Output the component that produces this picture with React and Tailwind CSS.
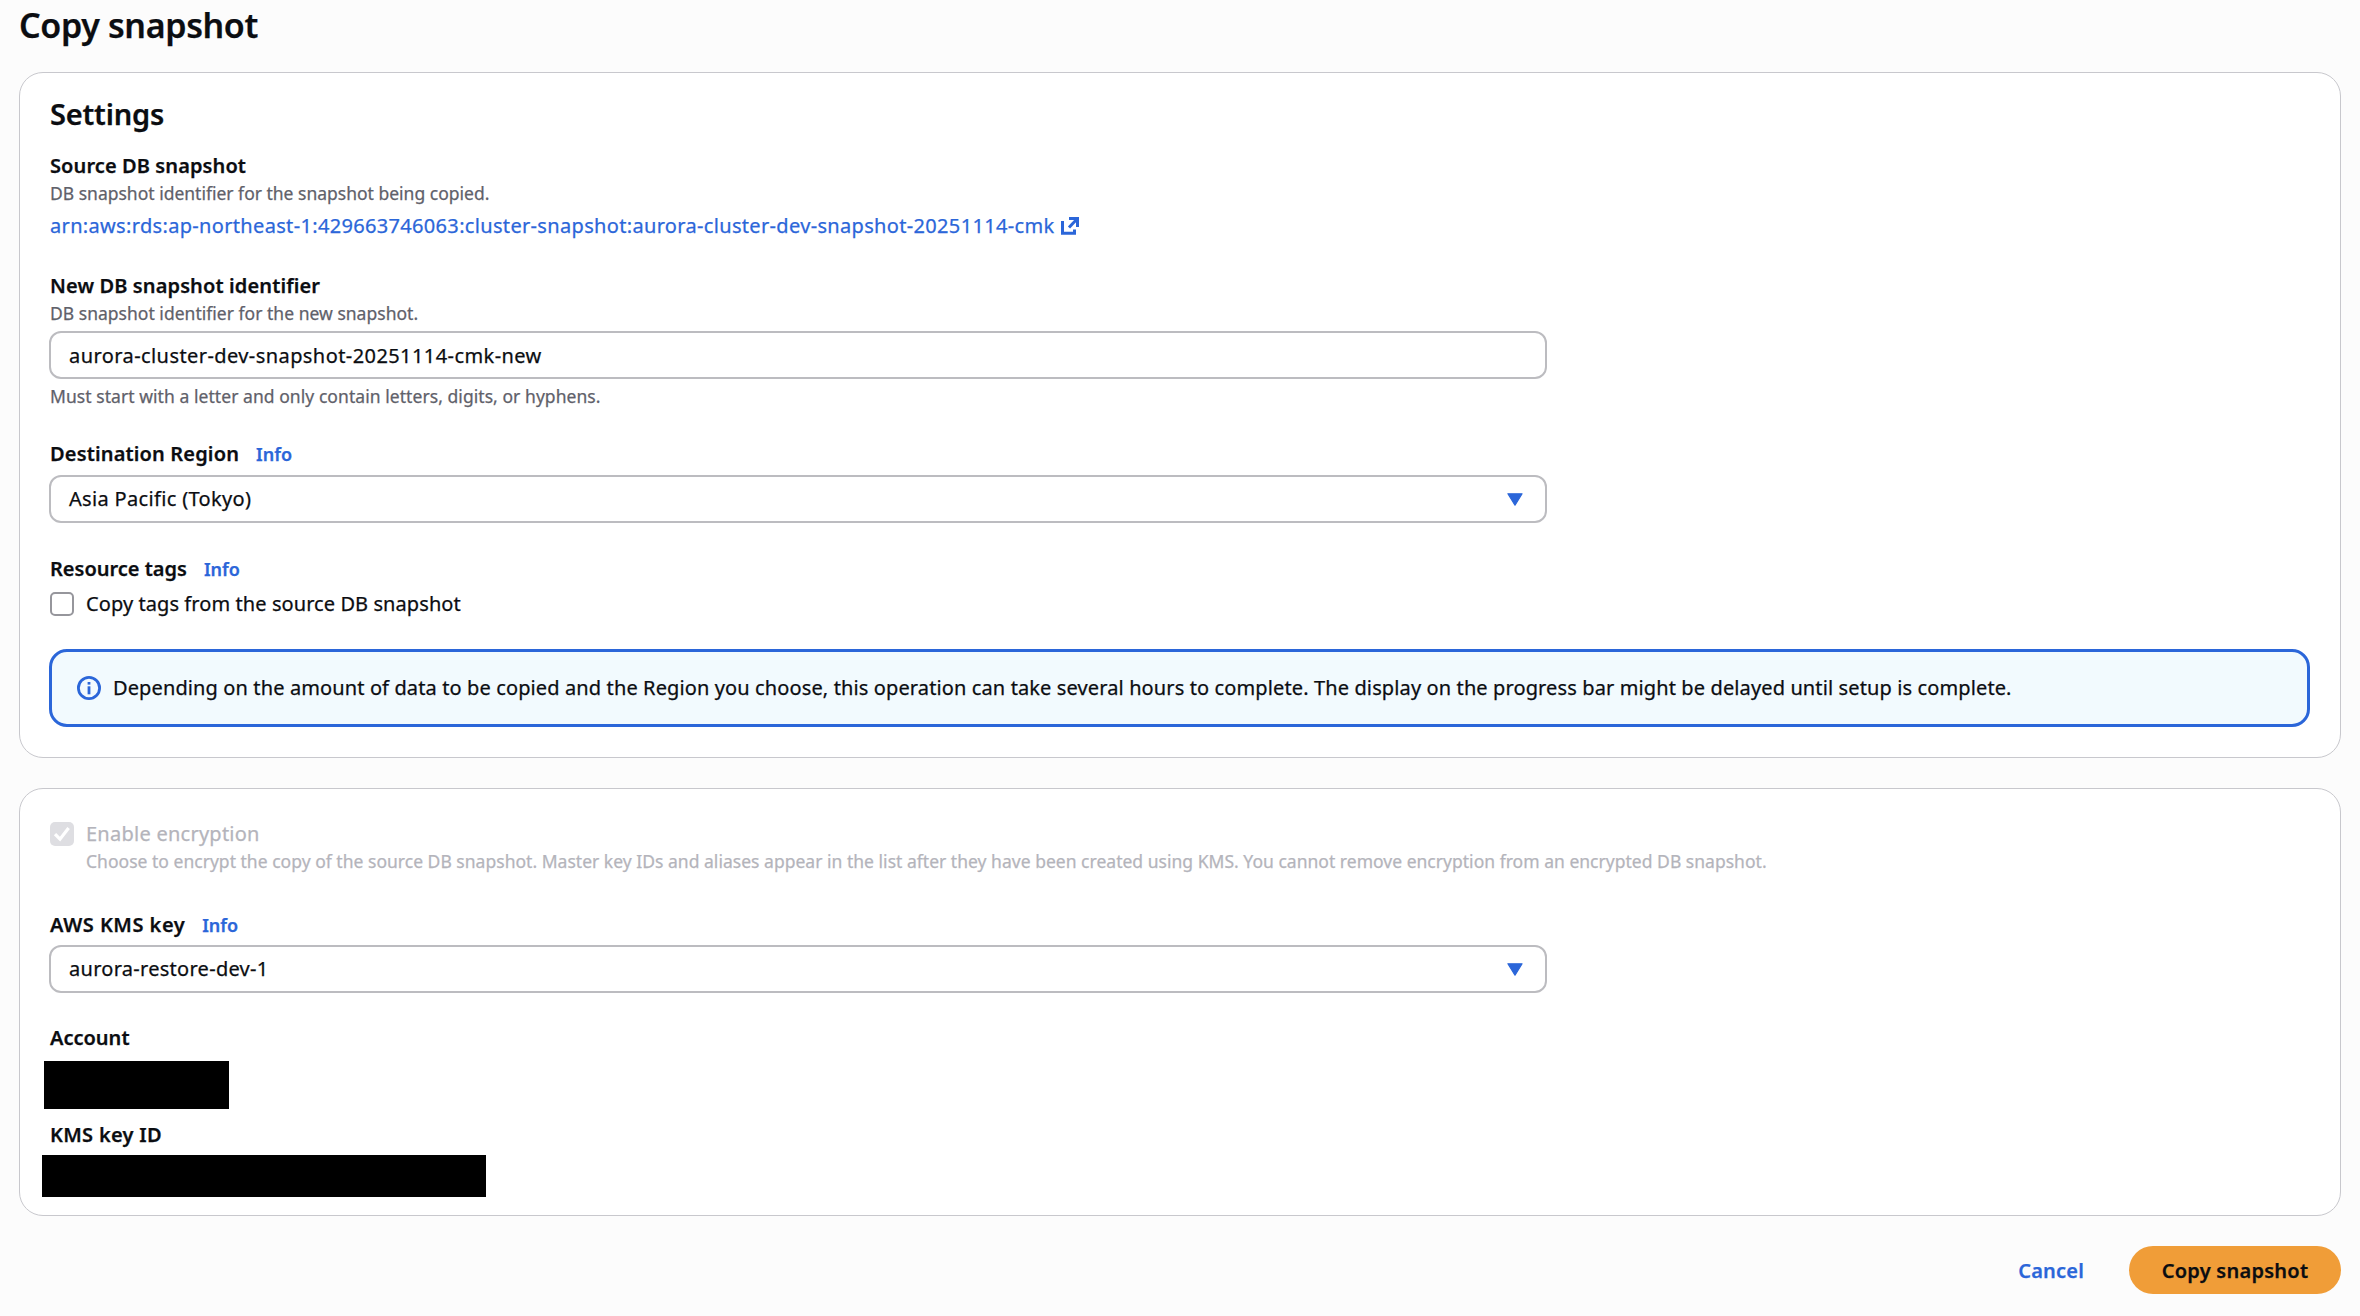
import React, { useState } from 'react';

function ExternalIcon() {
  return (
    <svg width="20" height="20" viewBox="0 0 20 20" fill="none" stroke="currentColor" strokeWidth="3" className="mt-[5px] ml-[6px] shrink-0">
      <path d="M9 2.5h8.5v8.5" />
      <path d="M17.5 2.5 9 11.5" />
      <path d="M2.5 5v12.2h12v-3.7" />
    </svg>
  );
}

function InfoIcon() {
  return (
    <svg width="24" height="24" viewBox="0 0 24 24" fill="none" stroke="#2b66d9" className="shrink-0">
      <circle cx="12" cy="12" r="10.6" strokeWidth="2.8" />
      <path d="M12 10.3v8" strokeWidth="2.8" />
      <path d="M12 6v2.6" strokeWidth="2.8" />
    </svg>
  );
}

function CaretDown() {
  return (
    <svg width="16" height="13" viewBox="0 0 16 13" className="shrink-0">
      <path d="M0.9 0.8h14.2L8 12.2z" fill="#2b66d9" stroke="#2b66d9" strokeWidth="1.2" strokeLinejoin="round" />
    </svg>
  );
}

function Label({ children, info, className = '' }) {
  return (
    <div className="flex h-[30px] items-baseline gap-[17px] pt-px">
      <span className={`text-[20px] leading-[30px] font-semibold ${className}`}>{children}</span>
      {info && (
        <a href="#info" className="text-[18px] leading-[24px] font-semibold text-[#2b66d9]">Info</a>
      )}
    </div>
  );
}

function Hint({ children, className = '' }) {
  return <p className={`text-[17.5px] leading-[24px] ${className}`}>{children}</p>;
}

function Select({ value, className = '' }) {
  return (
    <button type="button" className={`-ml-px flex h-[48px] w-[1498px] items-center justify-between rounded-[12px] border-2 border-[#bcbcc0] bg-white pr-[22px] pl-[18px] ${className}`}>
      <span>{value}</span>
      <CaretDown />
    </button>
  );
}

function App() {
  const [identifier, setIdentifier] = useState('aurora-cluster-dev-snapshot-20251114-cmk-new');
  const [copyTags, setCopyTags] = useState(false);

  return (
    <div className="min-h-screen bg-[#fcfcfc] pt-1 pr-[19px] pl-[19px] font-['Noto_Sans',sans-serif] text-[20px] leading-[30px] text-[#0b0d11] [-webkit-text-stroke:0.25px]">
      <h1 className="text-[34px] leading-[42px] font-semibold tracking-[-0.36px]">Copy snapshot</h1>

      {/* Settings */}
      <section className="mt-[26px] rounded-[24px] border border-[#c8c8cd] bg-white pt-[23px] pr-[30px] pb-[30px] pl-[30px]">
        <h2 className="text-[29px] leading-[36px] font-semibold tracking-[-0.2px]">Settings</h2>

        <div className="mt-[18px]">
          <Label className="tracking-[0.1px]">Source DB snapshot</Label>
          <Hint className="mt-px text-[#5f616a]">DB snapshot identifier for the snapshot being copied.</Hint>
          <a href="#snapshot" className="mt-[5px] flex h-[30px] pt-px text-[#2b66d9]">
            <span className="tracking-[0.33px]">arn:aws:rds:ap-northeast-1:429663746063:cluster-snapshot:aurora-cluster-dev-snapshot-20251114-cmk</span>
            <ExternalIcon />
          </a>
        </div>

        <div className="mt-[30px]">
          <Label className="tracking-[0.12px]">New DB snapshot identifier</Label>
          <Hint className="mt-px tracking-[0.02px] text-[#5f616a]">DB snapshot identifier for the new snapshot.</Hint>
          <input
            type="text"
            value={identifier}
            onChange={(e) => setIdentifier(e.target.value)}
            className="mt-[6px] -ml-px block h-[48px] w-[1498px] rounded-[12px] border-2 border-[#bcbcc0] bg-white pr-[17px] pl-[18px] tracking-[0.42px]"
          />
          <Hint className="mt-[5px] tracking-[0.06px] text-[#5f616a]">Must start with a letter and only contain letters, digits, or hyphens.</Hint>
        </div>

        <div className="mt-[30px]">
          <Label info className="tracking-[0.15px]">Destination Region</Label>
          <Select value="Asia Pacific (Tokyo)" className="mt-[7px] tracking-[0.33px]" />
        </div>

        <div className="mt-[30px]">
          <Label info>Resource tags</Label>
          <label className="mt-[5px] flex h-[30px]">
            <input
              type="checkbox"
              checked={copyTags}
              onChange={(e) => setCopyTags(e.target.checked)}
              className="mt-[4px] size-[24px] shrink-0 appearance-none rounded-[5px] border-2 border-[#96969c] bg-white checked:bg-[#2b66d9]"
            />
            <span className="ml-[12px] pt-px tracking-[0.08px]">Copy tags from the source DB snapshot</span>
          </label>
        </div>

        <div className="mt-[31px] -ml-px flex h-[78px] items-center gap-[12px] rounded-[18px] border-3 border-[#2b66d9] bg-[#f2fafe] pl-[25px]">
          <InfoIcon />
          <p className="tracking-[0.12px]">
            Depending on the amount of data to be copied and the Region you choose, this operation can take several hours to complete. The display on the progress bar might be delayed until setup is complete.
          </p>
        </div>
      </section>

      {/* Encryption */}
      <section className="mt-[30px] rounded-[24px] border border-[#c8c8cd] bg-white pt-[29px] pr-[30px] pb-[18px] pl-[30px]">
        <div className="flex text-[#b4b4bb]">
          <span className="mt-[4px] size-[24px] shrink-0 rounded-[5px] bg-[#dedee2]">
            <svg width="24" height="24" viewBox="0 0 24 24" fill="none" stroke="#fff" strokeWidth="3.2">
              <path d="M5 12.2l5 5L18.6 6" />
            </svg>
          </span>
          <div className="ml-[12px]">
            <div className="h-[30px] pt-px tracking-[0.25px]">Enable encryption</div>
            <Hint className="mt-px tracking-[0.02px]">
              Choose to encrypt the copy of the source DB snapshot. Master key IDs and aliases appear in the list after they have been created using KMS. You cannot remove encryption from an encrypted DB snapshot.
            </Hint>
          </div>
        </div>

        <div className="mt-[36px]">
          <Label info className="tracking-[0.5px]">AWS KMS key</Label>
          <Select value="aurora-restore-dev-1" className="mt-[6px] tracking-[0.28px]" />
        </div>

        <div className="mt-[29px]">
          <Label>Account</Label>
          <div className="mt-[9px] -ml-[6px] h-[48px] w-[185px] bg-black" />
        </div>

        <div className="mt-[10px]">
          <Label className="tracking-[0.3px]">KMS key ID</Label>
          <div className="mt-[6px] -ml-[8px] h-[42px] w-[444px] bg-black" />
        </div>
      </section>

      <footer className="mt-[30px] flex items-center justify-end gap-[45px] font-semibold">
        <button type="button" className="pt-px tracking-[0.2px] text-[#2b66d9]">Cancel</button>
        <button type="button" className="h-[48px] w-[212px] rounded-full bg-[#f09d38] pt-px tracking-[0.25px]">Copy snapshot</button>
      </footer>
    </div>
  );
}

export default App;
